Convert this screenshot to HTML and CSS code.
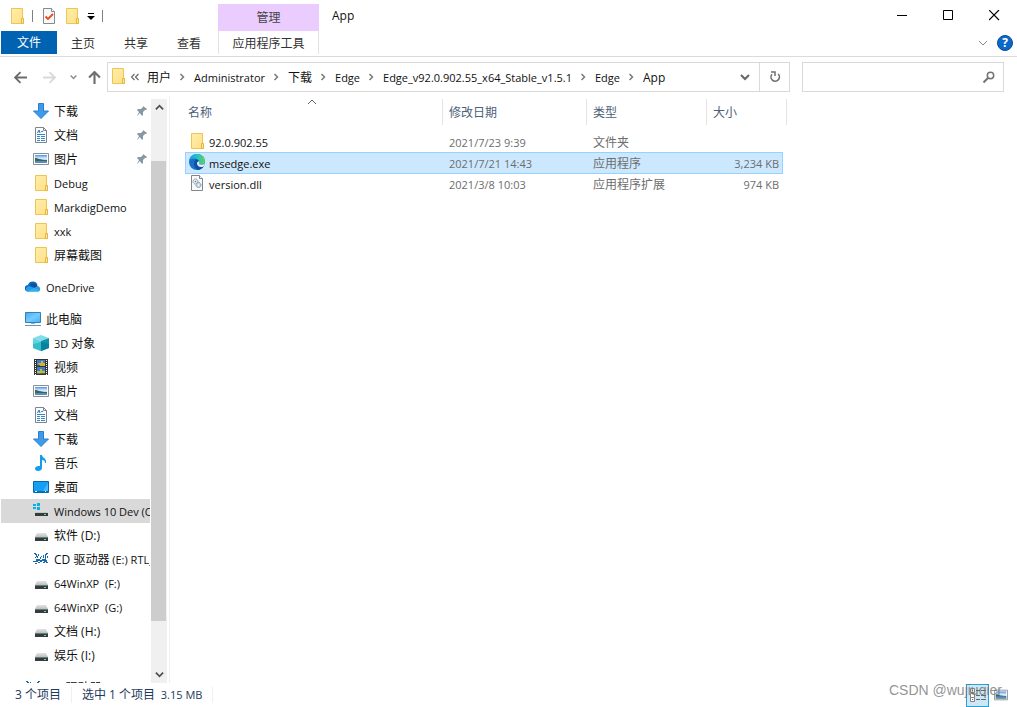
FILE: index.html
```html
<!DOCTYPE html>
<html lang="zh-CN">
<head>
<meta charset="utf-8">
<title>App</title>
<link rel="stylesheet" href="styles.css">
</head>
<body>
<svg class="defs" aria-hidden="true">
  <defs>
    <linearGradient id="g-folder" x1="0" y1="0" x2="1" y2="1"><stop offset="0" stop-color="#ffeeaa"/><stop offset="1" stop-color="#ffdf86"/></linearGradient>
    <linearGradient id="g-sky" x1="0" y1="0" x2="0" y2="1"><stop offset="0" stop-color="#4f8fe6"/><stop offset=".4" stop-color="#d8ecfb"/><stop offset=".6" stop-color="#b9dcf3"/><stop offset="1" stop-color="#2c4f78"/></linearGradient>
    <linearGradient id="g-screen" x1="0" y1="0" x2="1" y2="1"><stop offset="0" stop-color="#3fa9f5"/><stop offset=".5" stop-color="#74ccff"/><stop offset="1" stop-color="#43b2fa"/></linearGradient>
    <linearGradient id="g-edge" x1="0" y1="0" x2="1" y2="0"><stop offset="0" stop-color="#1a9fe0"/><stop offset=".5" stop-color="#29bfc8"/><stop offset="1" stop-color="#5fd650"/></linearGradient>
    <linearGradient id="g-drive" x1="0" y1="0" x2="0" y2="1"><stop offset="0" stop-color="#e3e6e8"/><stop offset="1" stop-color="#b9bec2"/></linearGradient>
  </defs>
  <symbol id="folder" viewBox="0 0 16 16"><path d="M2.5.5h11v10h1v5h-12z" fill="url(#g-folder)" stroke="#eec551"/><path d="M12.500 15.500v-5h2v5z" fill="#ffe799" stroke="#e3b83e"/></symbol>
  <symbol id="task" viewBox="0 0 16 16"><path d="M2.500.5h8l3 3v12h-11z" fill="#f7f8fa" stroke="#86898d"/><path d="M10.500.5v3h3" fill="#fff" stroke="#86898d"/><path d="M4.500 8.500l2.500 2.500L12 6" fill="none" stroke="#ee4a14" stroke-width="1.800"/></symbol>
  <symbol id="download" viewBox="0 0 16 16"><path d="M5.500.5h5v7.500h5L8 15.500.5 8h5z" fill="#3e9be9" stroke="#2b7fcb"/></symbol>
  <symbol id="document" viewBox="0 0 16 16"><path d="M2.500.5h8l3 3v12h-11z" fill="#fbfcfd" stroke="#7e8488"/><path d="M10.500.5v3h3" fill="none" stroke="#7e8488"/><path d="M8 4.500h2M4 7.500h8M4 9.500h3m1 0h4M4 11.500h3m1 0h4M4 13.500h3m1 0h4" stroke="#3887c5"/><path d="M4.500 6l1.500-3 1 3" stroke="#1e77c0" fill="none"/></symbol>
  <symbol id="picture" viewBox="0 0 16 16"><path d="M.5 2.500h15v11H.5z" fill="#fff" stroke="#898f94"/><path d="M2 4h12v8H2z" fill="url(#g-sky)"/><path d="M2 7c3 0 5 2 12 2v1H2z" fill="#39675c"/><path d="M2 10h12v2H2z" fill="#588cbd"/></symbol>
  <symbol id="cloud" viewBox="0 0 16 16"><path d="M3 12.500a3 3 0 0 1 0-6.500A5 5 0 0 1 12.500 6L9 11z" fill="#0768bd"/><path d="M5 6a5 5 0 0 1 8 1.500l-4 1z" fill="#104e9c"/><path d="M2 12.500a3 3 0 0 1 4-4.500l4 1 3-2a3 3 0 0 1 .5 5.500z" fill="#249ce8"/><path d="M2 12.500l7-3.500 6.500 2.500-2 1z" fill="#31aeef"/></symbol>
  <symbol id="computer" viewBox="0 0 16 16"><path d="M.5 1.500h15v10H.5z" fill="url(#g-screen)" stroke="#3b7fae"/><path d="M6 12h4v1H6z" fill="#9badbb"/><path d="M0 14.500h16" stroke="#6395b8"/></symbol>
  <symbol id="cube" viewBox="0 0 16 16"><path d="M8 0l8 3-8 3-8-3z" fill="#83dce7"/><path d="M0 3l8 3v10l-8-3z" fill="#5fd5e0"/><path d="M16 3L8 6v10l8-3z" fill="#0a93a9"/><path d="M0 9l8-2v9l-8-3z" fill="#35bccd"/><path d="M8 7l8 2v4l-8 3z" fill="#07839a"/></symbol>
  <symbol id="film" viewBox="0 0 16 16"><path d="M1 0h14v16H1z" fill="#343434"/><path d="M4 1h8v6H4zM4 8h8v7H4z" fill="#397ed6"/><path d="M5 4h3V2h2v2h2v3H6zM4 12h3v-2h2v2h3v2H4z" fill="#d9b12c"/><path d="M4 6h3v1H4zM8 14h4v1H8z" fill="#35743b"/><path d="M2.500 1v15M13.500 1v15" stroke="#fff" stroke-dasharray="1 1"/></symbol>
  <symbol id="music" viewBox="0 0 16 16"><path d="M7 0h2c0 3 5 3 4 8h-1c0-2-1-3-3-3v8c0 2-2 3-4 3S2 15 2 13.500 4 10.500 7 11z" fill="#119cf0"/></symbol>
  <symbol id="desktop" viewBox="0 0 16 16"><path d="M.5 2.500h15v11H.5z" fill="#16a0f5" stroke="#0866b4"/><path d="M10 12L15 4v8z" fill="#45b8fa"/><path d="M1 12.500h14" stroke="#086fbc"/><path d="M2 12.500h2m8 0h1" stroke="#fff"/></symbol>
  <symbol id="drive" viewBox="0 0 16 16"><path d="M4 6h9l2 4H2z" fill="url(#g-drive)"/><path d="M2 10h13v4H2z" fill="#383b3d"/><path d="M2 10.500h13" stroke="#70767a"/><path d="M11 12h2v1h-2z" fill="#4cf06c"/></symbol>
  <symbol id="windrive" viewBox="0 0 16 16"><path d="M0 1h3v2H0zM4 0h3v3H4zM0 4h3v2H0zM4 4h3v3H4z" fill="#08afe9"/><path d="M4 8h9l2 2H2z" fill="url(#g-drive)"/><path d="M2 10h13v3H2z" fill="#383b3d"/><path d="M11 11h2v1h-2z" fill="#4cf06c"/></symbol>
  <symbol id="chip" viewBox="0 0 16 16"><path d="M1 2h2v1h1v2h1v2H4V6H3V4H2V3H1zM5 3h1v2H5zM8 5h1v1H8zM10 4h1v3h-1zM12 3h1V2h2v1h-1v1h-1v3h-1zM2 6h1v1H2zM7 6h1v2H7zM14 5h1v2h-1zM3 8h4v1h2V8h4v1h1v2h-3v-1H9v1H7v-1H5v1H0v-1h3zM12 7h1v1h-1zM2 12h2v1H2zM5 11h2v1H5zM10 11h2v1h-2zM13 11h2v1h-2z" fill="#1769aa"/></symbol>
  <symbol id="pin" viewBox="0 0 10 10"><path d="M6 0l4 3-1 1-1 0-2 2 0 3-1 1-2-3-3 3 2-4-2-2 1-1 3 0 2-2z" fill="#8598a6"/></symbol>
  <symbol id="edge" viewBox="0 0 16 16"><circle cx="8" cy="8" r="8" fill="#1672c8"/><path d="M.2 6.500C1 2.500 4 0 8 0c4.500 0 8 3.200 8 7 0 2.300-1.600 3.800-3.800 3.800-1.700 0-2.700-.5-2.200-1.200C11 7.600 9 4.500 5.500 4.500 3 4.500 1 5.300.2 6.500z" fill="url(#g-edge)"/><path d="M5 9.500C5 7.500 6 6 7.600 5.300 9.800 6 10.700 8 9.800 9.700l2 2.300 3 .3C13 15 11 16 9 16c-2.500-1-4-3.500-4-6.500z" fill="#12509f"/><path d="M10.200 7.500c.3.800.2 1.500-.2 2.100-.4.600.6 1.200 2.200 1.200 1.500 0 2.700-.6 3.300-1.600.3 1-.2 2.200-.8 3-.5.400-1.300.8-2.500.8C9.500 13 7.800 11.200 8 9c.1-1 1-1.600 2.200-1.500z" fill="#e2f3ff"/></symbol>
  <symbol id="dll" viewBox="0 0 16 16"><path d="M2.500.5h8l3 3v12h-11z" fill="#fafafa" stroke="#82868a"/><path d="M10.500.5v3h3" fill="#fff" stroke="#82868a"/><circle cx="6.500" cy="6.500" r="2.500" fill="#e7edf2" stroke="#8295a3" stroke-dasharray="1.500 .5"/><circle cx="6.500" cy="6.500" r=".8" fill="#64819a"/><circle cx="9.500" cy="10" r="2.500" fill="#c7dae8" stroke="#7593a9" stroke-dasharray="1.500 .5"/><circle cx="9.500" cy="10" r=".8" fill="#fff"/></symbol>
  <symbol id="sep" viewBox="0 0 7 8"><path d="M1.500 1L4.500 4l-3 3" fill="none" stroke="#7a7a7a" stroke-width="1.500"/></symbol>
  <symbol id="chev-down" viewBox="0 0 10 10"><path d="M1 3l4 4 4-4" fill="none" stroke="currentColor" stroke-width="var(--line, 2)"/></symbol>
</svg>

<div class="window">
  <header class="ribbon">
    <div class="quick">
      <svg class="ico"><use href="#folder"/></svg>
      <i class="rule"></i>
      <button class="plain" aria-label="属性"><svg class="ico"><use href="#task"/></svg></button>
      <button class="plain" aria-label="新建文件夹"><svg class="ico"><use href="#folder"/></svg></button>
      <button class="plain" aria-label="自定义快速访问工具栏"><svg class="quick-more" viewBox="0 0 8 8"><path d="M1 1.500h6" stroke="#000"/><path d="M0 4h8L4 8z"/></svg></button>
      <i class="rule"></i>
    </div>
    <div class="context-head">管理</div>
    <div class="title-rest">
      <span class="title">App</span>
      <div class="caption">
        <button class="plain cap" aria-label="最小化"><svg viewBox="0 0 11 11"><path d="M0 5.500h10" stroke="#000"/></svg></button>
        <button class="plain cap" aria-label="最大化"><svg viewBox="0 0 11 11"><path d="M.5.5h9v9h-9z" fill="none" stroke="#000"/></svg></button>
        <button class="plain cap" aria-label="关闭"><svg viewBox="0 0 11 11"><path d="M0 0l10 10M10 0L0 10" stroke="#000" stroke-width="1.200"/></svg></button>
      </div>
    </div>
    <nav class="tabs">
      <button class="plain file">文件</button>
      <button class="plain tab">主页</button>
      <button class="plain tab">共享</button>
      <button class="plain tab">查看</button>
    </nav>
    <button class="plain context-tab">应用程序工具</button>
    <div class="ribbon-end">
      <button class="plain" aria-label="展开功能区"><svg class="fold"><use href="#chev-down"/></svg></button>
      <button class="plain help" aria-label="帮助">?</button>
    </div>
  </header>

  <div class="navbar">
    <div class="arrows">
      <button class="plain" aria-label="后退"><svg class="arrow" viewBox="0 0 12 12"><path d="M6 1L1 6l5 5M1 6h11" fill="none" stroke="#6b6b6b" stroke-width="1.700"/></svg></button>
      <button class="plain" aria-label="前进"><svg class="arrow" viewBox="0 0 12 12"><path d="M6 1l5 5-5 5M11 6H0" fill="none" stroke="#d9d9d9" stroke-width="1.700"/></svg></button>
      <button class="plain" aria-label="最近位置"><svg class="recent"><use href="#chev-down"/></svg></button>
      <button class="plain" aria-label="上移"><svg class="arrow" viewBox="0 0 12 12"><path d="M1 6l5-5 5 5M6 1v11" fill="none" stroke="#707070" stroke-width="2"/></svg></button>
    </div>
    <div class="address">
      <svg class="ico"><use href="#folder"/></svg>
      <svg class="dbl" viewBox="0 0 8 8"><path d="M3.500 1l-3 3 3 3M7.500 1l-3 3 3 3" fill="none" stroke="#666" stroke-width="1.200"/></svg>
      <div class="crumbs">
        <button class="plain">用户</button><svg><use href="#sep"/></svg>
        <button class="plain en">Administrator</button><svg><use href="#sep"/></svg>
        <button class="plain">下载</button><svg><use href="#sep"/></svg>
        <button class="plain en">Edge</button><svg><use href="#sep"/></svg>
        <button class="plain en">Edge_v92.0.902.55_x64_Stable_v1.5.1</button><svg><use href="#sep"/></svg>
        <button class="plain en">Edge</button><svg><use href="#sep"/></svg>
        <button class="plain">App</button>
      </div>
      <button class="plain history" aria-label="以前的位置"><svg><use href="#chev-down"/></svg></button>
      <button class="plain refresh" aria-label="刷新"><svg viewBox="0 0 12 12"><path d="M9.200 3A4.200 4.200 0 1 1 3 3.200" fill="none" stroke="#707070" stroke-width="1.600"/><path d="M2 1h4v4" fill="none" stroke="#707070" stroke-width="1.500"/></svg></button>
    </div>
    <div class="search">
      <input type="text" aria-label="搜索 App">
      <button class="plain" aria-label="搜索"><svg viewBox="0 0 12 12"><circle cx="7.500" cy="4.500" r="3.200" fill="none" stroke="#737373" stroke-width="1.500"/><path d="M5 7L.5 11.500" stroke="#737373" stroke-width="2"/></svg></button>
    </div>
  </div>

  <div class="body">
    <aside class="side">
      <ul class="tree">
        <li class="sub"><svg class="ico"><use href="#download"/></svg><span class="label">下载</span><svg class="pin"><use href="#pin"/></svg></li>
        <li class="sub"><svg class="ico"><use href="#document"/></svg><span class="label">文档</span><svg class="pin"><use href="#pin"/></svg></li>
        <li class="sub"><svg class="ico"><use href="#picture"/></svg><span class="label">图片</span><svg class="pin"><use href="#pin"/></svg></li>
        <li class="sub"><svg class="ico"><use href="#folder"/></svg><span class="label en">Debug</span></li>
        <li class="sub"><svg class="ico"><use href="#folder"/></svg><span class="label en">MarkdigDemo</span></li>
        <li class="sub"><svg class="ico"><use href="#folder"/></svg><span class="label en">xxk</span></li>
        <li class="sub"><svg class="ico"><use href="#folder"/></svg><span class="label">屏幕截图</span></li>
        <li class="root"><svg class="ico"><use href="#cloud"/></svg><span class="label en">OneDrive</span></li>
        <li class="root"><svg class="ico"><use href="#computer"/></svg><span class="label">此电脑</span></li>
        <li class="sub"><svg class="ico"><use href="#cube"/></svg><span class="label"><span class="en">3D </span>对象</span></li>
        <li class="sub"><svg class="ico"><use href="#film"/></svg><span class="label">视频</span></li>
        <li class="sub"><svg class="ico"><use href="#picture"/></svg><span class="label">图片</span></li>
        <li class="sub"><svg class="ico"><use href="#document"/></svg><span class="label">文档</span></li>
        <li class="sub"><svg class="ico"><use href="#download"/></svg><span class="label">下载</span></li>
        <li class="sub"><svg class="ico"><use href="#music"/></svg><span class="label">音乐</span></li>
        <li class="sub"><svg class="ico"><use href="#desktop"/></svg><span class="label">桌面</span></li>
        <li class="sub current"><svg class="ico"><use href="#windrive"/></svg><span class="label en">Windows 10 Dev (C:)</span></li>
        <li class="sub"><svg class="ico"><use href="#drive"/></svg><span class="label">软件 (D:)</span></li>
        <li class="sub"><svg class="ico"><use href="#chip"/></svg><span class="label">CD 驱动器<span class="en"> (E:) RTL_UL</span></span></li>
        <li class="sub"><svg class="ico"><use href="#drive"/></svg><span class="label en">64WinXP&nbsp; (F:)</span></li>
        <li class="sub"><svg class="ico"><use href="#drive"/></svg><span class="label en">64WinXP&nbsp; (G:)</span></li>
        <li class="sub"><svg class="ico"><use href="#drive"/></svg><span class="label">文档 (H:)</span></li>
        <li class="sub"><svg class="ico"><use href="#drive"/></svg><span class="label">娱乐 (I:)</span></li>
        <li class="root"><svg class="ico"><use href="#chip"/></svg><span class="label">CD 驱动器</span></li>
      </ul>
      <div class="scroll">
        <button class="plain" aria-label="向上滚动"><svg class="flip"><use href="#chev-down"/></svg></button>
        <div class="track"><div class="thumb"></div></div>
        <button class="plain" aria-label="向下滚动"><svg><use href="#chev-down"/></svg></button>
      </div>
    </aside>

    <main class="files">
      <table>
        <colgroup><col class="c-name"><col class="c-date"><col class="c-type"><col class="c-size"><col class="c-edge"></colgroup>
        <thead>
          <tr>
            <th>名称<svg class="sorted" viewBox="0 0 10 6"><path d="M1 5l4-4 4 4" fill="none" stroke="#666"/></svg></th>
            <th>修改日期</th><th>类型</th><th colspan="2">大小</th>
          </tr>
        </thead>
        <tbody>
          <tr><td class="en"><div class="name"><svg class="ico"><use href="#folder"/></svg>92.0.902.55</div></td><td class="en">2021/7/23 9:39</td><td>文件夹</td><td></td></tr>
          <tr class="selected"><td class="en"><div class="name"><svg class="ico"><use href="#edge"/></svg>msedge.exe</div></td><td class="en">2021/7/21 14:43</td><td>应用程序</td><td class="en">3,234 KB</td></tr>
          <tr><td class="en"><div class="name"><svg class="ico"><use href="#dll"/></svg>version.dll</div></td><td class="en">2021/3/8 10:03</td><td>应用程序扩展</td><td class="en">974 KB</td></tr>
        </tbody>
      </table>
    </main>
  </div>

  <footer class="status">
    <span class="count">3 个项目</span>
    <span class="picked">选中 1 个项目<span class="en">&nbsp; 3.15 MB</span></span>
    <div class="views">
      <button class="plain view on" aria-label="详细信息"><svg viewBox="0 0 16 14"><path d="M.5.5h4v4h-4zM.5 5.500h4v4h-4zM.5 9.500h4v4h-4z" fill="#fff" stroke="#858585"/><path d="M6 2.500h4m1 0h5M6 7.500h4m1 0h5M6 11.500h4m1 0h5" stroke="#666"/><path d="M2 2h1v1H2zM2 11h1v1H2z" fill="#e33"/></svg></button>
      <button class="plain view" aria-label="大图标"><svg class="thumbs"><use href="#picture"/></svg></button>
    </div>
    <span class="mark">CSDN @wujiuqier</span>
  </footer>
</div>
</body>
</html>
```
FILE: styles.css
```css
* { box-sizing: border-box; }
body {
  margin: 0;
  background: #fff;
  color: #111;
  font: 12px/16px "Open Sans", "Noto Sans CJK SC", sans-serif;
}
svg { display: block; flex: none; }
.defs { position: absolute; width: 0; height: 0; }
.plain { margin: 0; padding: 0; border: 0; background: none; color: inherit; font: inherit; white-space: nowrap; }
.en, .plain.en { font-size: 11px; }
.ico { width: 16px; height: 16px; }
.window { display: flex; flex-direction: column; height: 100vh; }

/* Title bar and ribbon tabs */
.ribbon {
  display: grid;
  grid-template-columns: 218px 101px 1fr;
  grid-template-rows: 31px 25px;
  border-bottom: 1px solid #dadbdc;
  height: 57px;
}
.quick { display: flex; align-items: center; gap: 7px; padding-left: 9px; }
.rule { width: 1px; height: 12px; background: #808080; }
.quick .rule:nth-child(2) { margin-right: 1px; }
.quick-more { width: 8px; height: 8px; }
.context-head {
  display: flex; align-items: center; justify-content: center;
  margin-top: 4px; background: #eaccff; color: #444;
}
.title-rest { display: flex; align-items: center; justify-content: space-between; padding-left: 13px; }
.caption { display: flex; }
.cap { display: grid; place-items: center; width: 46px; height: 30px; }
.cap svg { width: 11px; height: 11px; }
.tabs { display: flex; padding-left: 1px; height: 23px; }
.file { width: 56px; background: #0063b1; color: #fff; }
.tab { width: 53px; padding: 2px 1px 0 0; color: #333; }
.context-tab { height: 23px; padding-top: 2px; border: solid #e2e2e2; border-width: 0 1px; color: #333; }
.ribbon-end { display: flex; align-items: center; justify-content: flex-end; gap: 9px; padding-right: 4px; height: 23px; }
.fold { --line: 1; width: 10px; height: 10px; color: #888; }
.help { width: 16px; height: 16px; border-radius: 50%; border: 1px solid #084e97; background: #0a68c8; color: #fff; font-weight: 700; line-height: 14px; }

/* Navigation row */
.navbar { display: flex; gap: 12px; padding: 5px 13px 4px 14px; }
.arrows { display: flex; align-items: center; gap: 16px; width: 81px; }
.arrow { width: 13px; height: 13px; }
.arrows button:nth-child(2) { margin-right: -2px; }
.recent { width: 7px; height: 8px; color: #8a8a8a; }
.arrows button:nth-child(4) { margin-left: -5px; }
.address { display: flex; align-items: center; flex: 1; height: 30px; border: 1px solid #d9d9d9; padding-left: 2px; }
.address > .ico { margin-bottom: 2px; }
.dbl { width: 8px; height: 8px; margin: 0 8px 0 5px; }
.crumbs { display: flex; align-items: center; gap: 8px; flex: 1; }
.crumbs button { padding-top: 1px; }
.crumbs svg { width: 7px; height: 8px; }
.history { display: grid; place-items: center; width: 28px; }
.history svg { width: 10px; height: 10px; color: #666; }
.refresh { display: grid; place-items: center; width: 30px; height: 28px; border-left: 1px solid #d9d9d9; }
.refresh svg { width: 12px; height: 12px; }
.search { display: flex; align-items: center; width: 202px; height: 30px; border: 1px solid #d9d9d9; padding-right: 8px; }
.search input { flex: 1; min-width: 0; border: 0; outline: 0; font: inherit; }
.search svg { width: 12px; height: 12px; }

/* Folder tree */
.body { display: flex; flex: 1; min-height: 0; }
.side { display: flex; width: 170px; padding-top: 3px; border-right: 1px solid #f0f0f0; }
.tree { flex: 1; min-width: 0; margin: 0; padding: 0 1px; list-style: none; overflow: hidden; }
.tree li { display: flex; align-items: center; gap: 5px; height: 24px; white-space: nowrap; overflow: hidden; }
.tree .sub { padding-left: 32px; }
.tree .root { padding-left: 24px; margin-top: 8px; }
.tree .current { background: #d9d9d9; }
.label { padding-top: 2px; }
.pin { width: 10px; height: 10px; margin: 0 3px 0 auto; }
.scroll { display: flex; flex-direction: column; width: 16px; margin-right: 2px; background: #f0f0f0; }
.scroll button { display: grid; place-items: center; height: 17px; }
.scroll svg { width: 9px; height: 9px; color: #505050; }
.flip { transform: rotate(180deg); }
.track { flex: 1; padding: 45px 1px 45px 0; }
.thumb { height: 100%; background: #cdcdcd; }

/* File list */
.files { flex: 1; padding: 3px 0 0 15px; }
table { table-layout: fixed; width: 602px; border-collapse: separate; border-spacing: 0; }
.c-name { width: 258px; }
.c-date { width: 144px; }
.c-type { width: 120px; }
.c-size { width: 76px; }
.c-edge { width: 4px; }
th { position: relative; height: 26px; padding: 2px 6px 0; border-right: 1px solid #e5e5e5; color: #4c607a; font-weight: 400; text-align: left; }
th:first-child { padding-left: 3px; }
.sorted { position: absolute; top: 0; left: 122px; width: 10px; height: 6px; }
tbody::before { content: ""; display: block; height: 7px; }
td { height: 21px; padding: 0 6px; color: #6d6d6d; white-space: nowrap; }
td:first-child { padding-left: 4px; color: #111; }
td:nth-child(4) { padding-right: 4px; text-align: right; }
.name { display: flex; align-items: center; gap: 4px; height: 21px; }
.name .ico { margin-bottom: 3px; }
.selected td { background: #cce8ff; box-shadow: 0 -1px #99d1ff, inset 0 -1px #99d1ff; }
.selected td:first-child { box-shadow: 0 -1px #99d1ff, inset 1px -1px #99d1ff; }
.selected td:last-child { box-shadow: 0 -1px #99d1ff, inset -1px -1px #99d1ff; }

/* Status bar */
.status { position: relative; display: flex; align-items: center; height: 24px; padding: 0 7px 0 15px; color: #1e395b; }
.count, .picked { padding-right: 10px; margin-right: 10px; border-right: 1px solid #f0f0f0; }
.views { display: flex; align-items: center; gap: 3px; margin-left: auto; }
.view { display: grid; place-items: center; height: 23px; width: 18px; }
.view.on { width: 23px; border: 1px solid #2a9fd8; background: #cbe8f6; }
.view svg { width: 16px; height: 14px; }
.view .thumbs { width: 14px; height: 14px; }
.mark { position: absolute; right: 15px; top: -1px; color: rgba(110, 110, 110, .75); font: 14px/16px "Liberation Sans", sans-serif; }
```
